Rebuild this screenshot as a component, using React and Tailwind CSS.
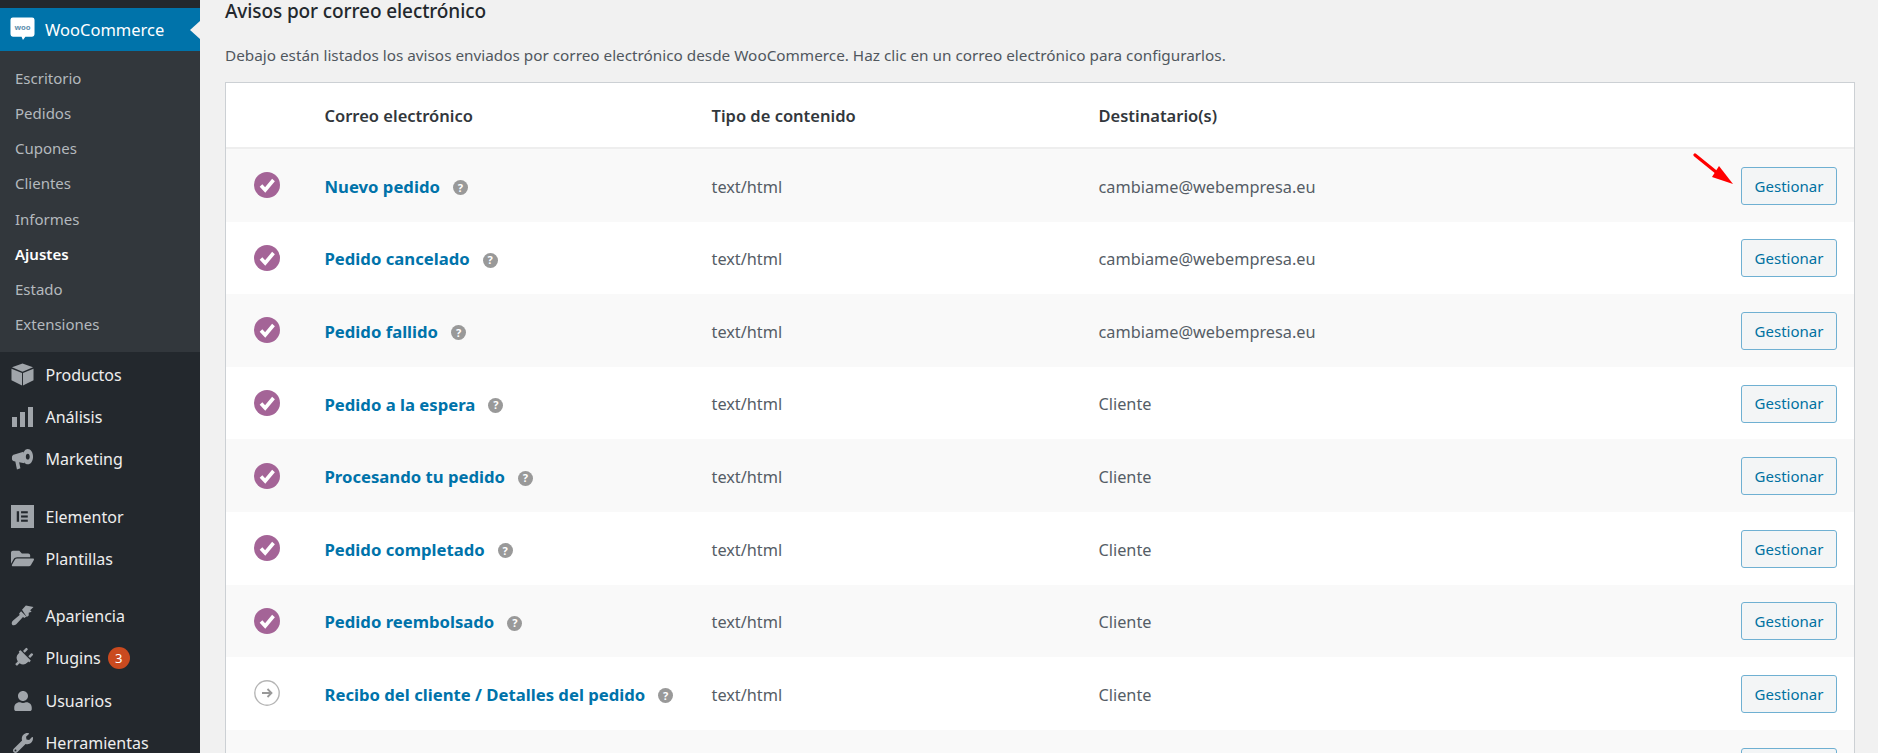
import React from "react";
import { FaFolderOpen, FaPlug, FaUser, FaWrench } from "react-icons/fa";

const SUBMENU = ["Escritorio", "Pedidos", "Cupones", "Clientes", "Informes", "Ajustes", "Estado", "Extensiones"];

const EMAILS = [
  { name: "Nuevo pedido", to: "cambiame@webempresa.eu", on: true },
  { name: "Pedido cancelado", to: "cambiame@webempresa.eu", on: true },
  { name: "Pedido fallido", to: "cambiame@webempresa.eu", on: true },
  { name: "Pedido a la espera", to: "Cliente", on: true },
  { name: "Procesando tu pedido", to: "Cliente", on: true },
  { name: "Pedido completado", to: "Cliente", on: true },
  { name: "Pedido reembolsado", to: "Cliente", on: true },
  { name: "Recibo del cliente / Detalles del pedido", to: "Cliente", on: false },
];

function BoxIcon() {
  return (
    <svg viewBox="0 0 24 24" className="w-[23px] h-[23px]" fill="currentColor">
      <path d="M12 .5 1 4.500 12 9l11-4.500L12 .5z" />
      <path d="M.5 6v12l11 5.500V10.500L.5 6zM23.500 6l-11 4.500v13l11-5.500V6z" />
    </svg>
  );
}

function BarsIcon() {
  return (
    <svg viewBox="0 0 22 20" className="w-[22px] h-[20px]" fill="currentColor">
      <rect x="0" y="10" width="5" height="10" />
      <rect x="8" y="5" width="5" height="15" />
      <rect x="16" y="0" width="5" height="20" />
    </svg>
  );
}

function MegaphoneIcon() {
  return (
    <svg viewBox="0 0 24 24" className="w-[23px] h-[23px]" fill="currentColor">
      <path d="M1 9.500c0-1.500 1-2.500 2.500-2.800L13 4c1 3 1.500 8 1 12L8.500 14.800 9.800 21l-3.600 1.500-1.700-8.300C2.500 14 1 13 1 11.500v-2z" />
      <path fillRule="evenodd" d="M17.500 1C20.500 1 23 4.500 23 9s-2.500 8-5.500 8S12.500 13.500 12.500 9s2-8 5-8zm0 5c-1.200 0-2 1.300-2 3s.8 3 2 3 2-1.300 2-3-.8-3-2-3z" />
    </svg>
  );
}

function ElementorIcon() {
  return (
    <svg viewBox="0 0 24 24" className="w-[23px] h-[23px]">
      <rect width="24" height="24" fill="currentColor" />
      <rect x="6" y="6.500" width="2.400" height="11" fill="#23282d" />
      <rect x="10.500" y="6.500" width="7" height="2.200" fill="#23282d" />
      <rect x="10.500" y="10.900" width="7" height="2.200" fill="#23282d" />
      <rect x="10.500" y="15.300" width="7" height="2.200" fill="#23282d" />
    </svg>
  );
}

function BrushIcon() {
  return (
    <svg viewBox="0 0 24 24" className="w-[24px] h-[24px]" fill="currentColor">
      <path d="M11.500 5.500 15.500 1l8 1.500-3.500 3.500 1.500 1.500-3 1v3l-2 1.500z" />
      <path d="M10.500 7 16 12.500l-2 1.500-1.500-1L5.500 20.500C4 22 2 22 1.200 21s-.6-2.800 1-4.200L9 11l-.5-1.500z" />
    </svg>
  );
}

function MenuRow({ icon, label, badge, gap }) {
  return (
    <div className={`flex shrink-0 items-center h-[42.300px] pl-[11px] text-[#eeeeee] ${gap ? "mt-[15px]" : ""}`}>
      <span className="w-[23px] flex justify-center text-[#a0a5aa]">{icon}</span>
      <span className="ml-[11.500px] text-[16px]">{label}</span>
      {badge && (
        <span className="ml-[7px] w-[22px] h-[22px] rounded-full bg-[#ca4a1f] text-white text-[13px] flex items-center justify-center">
          {badge}
        </span>
      )}
    </div>
  );
}

function Sidebar() {
  return (
    <aside className="w-[200px] shrink-0 bg-[#23282d] flex flex-col overflow-hidden">
      <div className="h-[8px] shrink-0" />
      <div className="relative shrink-0 h-[42.500px] bg-[#0073aa] flex items-center pl-[10px] text-white text-[16.500px]">
        <svg viewBox="0 0 26 26" className="w-[25px] h-[26px]">
          <path d="M3 1h20a2.500 2.500 0 0 1 2.500 2.500v15a2.500 2.500 0 0 1-2.500 2.500h-7l-2.500 3.500-1.500-3.500H3A2.500 2.500 0 0 1 .5 18.500v-15A2.500 2.500 0 0 1 3 1z" fill="#fff" />
          <text x="13" y="14" textAnchor="middle" fontSize="8" fontWeight="700" fill="#5f8fae">woo</text>
        </svg>
        <span className="ml-[10px] pt-[3px]">WooCommerce</span>
        <span className="absolute right-0 top-[13px] w-0 h-0 border-y-[9px] border-y-transparent border-r-[10px] border-r-[#f1f1f1]" />
      </div>
      <div className="h-[301px] shrink-0 bg-[#32373c] pt-[10px]">
        {SUBMENU.map((item) => (
          <div
            key={item}
            className={`h-[35.200px] pl-[15px] flex items-center text-[15px] ${item === "Ajustes" ? "text-white font-semibold" : "text-[#b4b9be]"}`}
          >
            {item}
          </div>
        ))}
      </div>
      <div className="pt-[2px] shrink-0">
        <MenuRow icon={<BoxIcon />} label="Productos" />
        <MenuRow icon={<BarsIcon />} label="Análisis" />
        <MenuRow icon={<MegaphoneIcon />} label="Marketing" />
        <MenuRow icon={<ElementorIcon />} label="Elementor" gap />
        <MenuRow icon={<FaFolderOpen size={23} />} label="Plantillas" />
        <MenuRow icon={<BrushIcon />} label="Apariencia" gap />
        <MenuRow icon={<FaPlug size={20} className="rotate-45" />} label="Plugins" badge="3" />
        <MenuRow icon={<FaUser size={20} />} label="Usuarios" />
        <MenuRow icon={<FaWrench size={20} />} label="Herramientas" />
      </div>
    </aside>
  );
}

function StatusIcon({ on }) {
  if (on) {
    return (
      <svg viewBox="0 0 26 26" className="w-[26px] h-[26px]">
        <circle cx="13" cy="13" r="13" fill="#a46497" />
        <path d="M7 13.500l4.200 4.500L19.500 8" fill="none" stroke="#fff" strokeWidth="3.600" />
      </svg>
    );
  }
  return (
    <svg viewBox="0 0 26 26" className="w-[26px] h-[26px]" fill="none">
      <circle cx="13" cy="13" r="12.200" stroke="#b5b5b5" strokeWidth="1.400" />
      <path d="M8 13h9M13.500 9l4 4-4 4" stroke="#999999" strokeWidth="1.800" />
    </svg>
  );
}

function RedArrow() {
  return (
    <svg viewBox="0 0 42 34" className="absolute right-[119px] top-[3px] w-[42px] h-[34px]">
      <path d="M2 3 23 20" stroke="#ff0000" strokeWidth="3.200" strokeLinecap="round" />
      <path d="M40 32 19 25 26 14z" fill="#ff0000" />
    </svg>
  );
}

function Row({ email, alt, arrow }) {
  return (
    <div className={`relative flex items-center h-[72.600px] text-[16.300px] text-[#555d66] ${alt ? "bg-[#f9f9f9]" : "bg-white"}`}>
      <div className="w-[98.500px] pl-[28px]">{email && <StatusIcon on={email.on} />}</div>
      <div className="w-[387px] pt-[2px] flex items-center">
        {email && (
          <>
            <span className="font-bold text-[16.700px] text-[#0073aa]">{email.name}</span>
            <span className="ml-[13px] mt-[3px] w-[15px] h-[15px] rounded-full bg-[#999999] text-white text-[11px] font-bold flex items-center justify-center">?</span>
          </>
        )}
      </div>
      <div className="w-[387px] pt-[3px]">{email && "text/html"}</div>
      <div className="flex-1 pt-[3px]">{email && email.to}</div>
      {arrow && <RedArrow />}
      <button className="mr-[17px] mt-[1px] w-[96px] h-[38px] border border-[#6fb0d2] rounded-[3px] bg-[#f3f5f6] text-[#0071a1] text-[15px]">
        {email && "Gestionar"}
      </button>
    </div>
  );
}

export default function App() {
  return (
    <div className="flex h-[753px] overflow-hidden bg-[#f1f1f1] font-['Noto_Sans','Open_Sans',sans-serif]">
      <Sidebar />
      <main className="flex-1 min-w-0 pl-[25px] pr-[23px]">
        <h2 className="text-[19px] leading-[22px] tracking-[-0.1px] font-medium text-[#23282d]">Avisos por correo electrónico</h2>
        <p className="mt-[21px] text-[15.300px] leading-[24px] text-[#50575e]">
          Debajo están listados los avisos enviados por correo electrónico desde WooCommerce. Haz clic en un correo electrónico para configurarlos.
        </p>
        <div className="mt-[15px] border border-[#ccd0d4] bg-white">
          <div className="flex items-center h-[66px] pt-[3px] border-b-2 border-[#eeeeee] text-[16.500px] font-semibold text-[#32373c]">
            <div className="w-[98.500px]" />
            <div className="w-[387px]">Correo electrónico</div>
            <div className="w-[387px]">Tipo de contenido</div>
            <div>Destinatario(s)</div>
          </div>
          {EMAILS.map((email, i) => (
            <Row key={email.name} email={email} alt={i % 2 === 0} arrow={i === 0} />
          ))}
          <Row alt />
        </div>
      </main>
    </div>
  );
}
